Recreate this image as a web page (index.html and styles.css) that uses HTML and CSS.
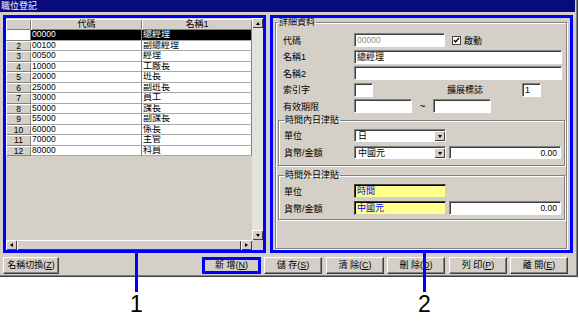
FILE: index.html
```html
<!DOCTYPE html>
<html lang="zh-Hant">
<head>
  <meta charset="UTF-8">
  <title>職位登記</title>
  <link rel="stylesheet" href="styles.css">
</head>
<body>
  <div class="screen">
    <div class="window">
      <div class="titlebar">職位登記</div>

      <div class="panels">
        <div class="box left-box">
          <div class="grid-area">
            <div class="table">
              <div class="rh"></div><div class="hd">代碼</div><div class="hd">名稱1</div>

              <div class="rh current"></div><div class="cell num sel">00000</div><div class="cell sel">總經理</div>
              <div class="rh">2</div><div class="cell num">00100</div><div class="cell">副總經理</div>
              <div class="rh">3</div><div class="cell num">00500</div><div class="cell">經理</div>
              <div class="rh">4</div><div class="cell num">10000</div><div class="cell">工廠長</div>
              <div class="rh">5</div><div class="cell num">20000</div><div class="cell">班長</div>
              <div class="rh">6</div><div class="cell num">25000</div><div class="cell">副班長</div>
              <div class="rh">7</div><div class="cell num">30000</div><div class="cell">員工</div>
              <div class="rh">8</div><div class="cell num">50000</div><div class="cell">課長</div>
              <div class="rh">9</div><div class="cell num">55000</div><div class="cell">副課長</div>
              <div class="rh">10</div><div class="cell num">60000</div><div class="cell">係長</div>
              <div class="rh">11</div><div class="cell num">70000</div><div class="cell">主管</div>
              <div class="rh">12</div><div class="cell num">80000</div><div class="cell">科員</div>
            </div>
            <div class="vscroll">
              <div class="arrow up"></div>
              <div class="track"></div>
              <div class="arrow down"></div>
            </div>
          </div>
          <div class="hscroll">
            <div class="arrow left"></div>
            <div class="thumb"></div>
            <div class="arrow right"></div>
            <div class="corner"></div>
          </div>
        </div>

        <div class="box right-box">
          <fieldset class="group detail">
            <legend>詳細資料</legend>
            <div class="field">
              <span class="label">代碼</span>
              <span class="input w-code disabled">00000</span>
              <span class="check">
                <svg width="9" height="9" viewBox="0 0 9 9"><rect x="0.5" y="0.5" width="8" height="8" fill="#fff" stroke="#404040"/><path d="M2 4 L3.6 6 L7 2" fill="none" stroke="#000" stroke-width="1.3"/></svg>
              </span>
              <span class="check-label">啟動</span>
            </div>
            <div class="field">
              <span class="label">名稱1</span>
              <span class="input w-name">總經理</span>
            </div>
            <div class="field">
              <span class="label">名稱2</span>
              <span class="input w-name"></span>
            </div>
            <div class="field">
              <span class="label">索引字</span>
              <span class="input w-tiny"></span>
              <span class="ext-label">擴展標誌</span>
              <span class="input w-tiny">1</span>
            </div>
            <div class="field">
              <span class="label">有效期限</span>
              <span class="input w-date"></span>
              <span class="tilde">~</span>
              <span class="input w-date"></span>
            </div>

            <fieldset class="group sub sub-in">
              <legend>時間內日津貼</legend>
              <div class="field">
                <span class="label">單位</span>
                <span class="input select"><span class="val">日</span><span class="drop"></span></span>
              </div>
              <div class="field">
                <span class="label">貨幣/金額</span>
                <span class="input select"><span class="val">中國元</span><span class="drop"></span></span>
                <span class="input amount">0.00</span>
              </div>
            </fieldset>

            <fieldset class="group sub sub-out">
              <legend>時間外日津貼</legend>
              <div class="field">
                <span class="label">單位</span>
                <span class="input hatch">時間</span>
              </div>
              <div class="field">
                <span class="label">貨幣/金額</span>
                <span class="input hatch">中國元</span>
                <span class="input amount">0.00</span>
              </div>
            </fieldset>
          </fieldset>
        </div>
      </div>

      <div class="buttons">
        <div class="btn switch">名稱切換(<u>Z</u>)</div>
        <div class="btn add">新&nbsp;增(<u>N</u>)</div>
        <div class="btn save">儲&nbsp;存(<u>S</u>)</div>
        <div class="btn">清&nbsp;除(<u>C</u>)</div>
        <div class="btn">刪&nbsp;除(<u>D</u>)</div>
        <div class="btn">列&nbsp;印(<u>P</u>)</div>
        <div class="btn">離&nbsp;開(<u>E</u>)</div>
      </div>
    </div>

    <div class="callout one"><span>1</span></div>
    <div class="callout two"><span>2</span></div>
  </div>
</body>
</html>
```

FILE: styles.css
```css
body {
  margin: 0;
  background: #fff;
  font-family: "Liberation Sans", "Noto Sans CJK TC", sans-serif;
  font-size: 9px;
  color: #000;
}

.screen {
  position: relative;
  width: 579px;
  height: 321px;
  overflow: hidden;
}

.window {
  width: 578px;
  height: 277px;
  box-sizing: border-box;
  background: #d4d0c8;
  box-shadow: inset -1px -1px 0 #404040, inset -2px -2px 0 #808080;
}

.titlebar {
  width: 575px;
  height: 12px;
  background: #0a0a80;
  color: #fff;
  line-height: 12px;
  padding-left: 1px;
  box-sizing: border-box;
}

.panels {
  display: flex;
  gap: 4px;
  padding: 3px 0 0 3px;
}

.box {
  border: 3px solid #0000ff;
  height: 238px;
  box-sizing: border-box;
}

/* left: grid list */
.left-box {
  width: 263px;
  display: flex;
  flex-direction: column;
}

.grid-area {
  display: flex;
  height: 222px;
}

.table {
  width: 246px;
  display: grid;
  grid-template-columns: 25px 111px 110px;
  grid-template-rows: 11px;
  grid-auto-rows: 10.5px;
  align-content: start;
  padding-top: 1px;
}

.rh, .hd {
  background: #d4d0c8;
  box-shadow: inset 1px 1px 0 #fff, inset -1px -1px 0 #808080;
  text-align: center;
  line-height: 10px;
  overflow: hidden;
}

.rh {
  font-size: 8.5px;
}

.rh.current {
  background: #fff;
  box-shadow: inset -1px -1px 0 #808080;
}

.cell {
  background: #fff;
  border-right: 1px solid #808080;
  border-bottom: 1px solid #a8a8a8;
  padding-left: 1px;
  line-height: 9.5px;
  white-space: nowrap;
  overflow: hidden;
}

.cell.num {
  font-size: 8.5px;
}

.cell.sel {
  background: #000;
  color: #fff;
}

.vscroll {
  width: 11px;
  display: flex;
  flex-direction: column;
}

.track {
  flex: 1;
  background: #e4e2dc;
}

.arrow {
  flex: none;
  width: 11px;
  height: 10px;
  box-sizing: border-box;
  background: #d4d0c8;
  box-shadow: inset 1px 1px 0 #fff, inset -1px -1px 0 #404040;
  display: flex;
  align-items: center;
  justify-content: center;
}

.arrow::after {
  content: "";
  border: 2px solid transparent;
}

.arrow.up::after { border-bottom: 3px solid #000; border-top: 0; }
.arrow.down::after { border-top: 3px solid #000; border-bottom: 0; }
.arrow.left::after { border-right: 3px solid #000; border-left: 0; }
.arrow.right::after { border-left: 3px solid #000; border-right: 0; }

.hscroll {
  height: 10px;
  display: flex;
}

.thumb {
  flex: 1;
  background: #d4d0c8;
  box-shadow: inset 1px 1px 0 #fff, inset -1px -1px 0 #404040;
}

.corner {
  width: 11px;
  background: #d4d0c8;
}

/* right: detail form */
.right-box {
  width: 303px;
  display: flex;
  flex-direction: column;
}

.group {
  border: 1px solid #808080;
  box-shadow: inset 1px 1px 0 #fff, 1px 1px 0 #fff;
  min-width: 0;
  margin: 0;
}

.group legend {
  padding: 0 1px;
  line-height: 9px;
  font-size: 9px;
}

.detail {
  flex: 1;
  margin: 0 3px 1px 2px;
  padding: 6px 1px 0 2px;
}

.detail > .field {
  padding-left: 5px;
}

.field {
  display: flex;
  align-items: center;
  height: 14px;
}

.field + .field {
  margin-top: 2.5px;
}

.label {
  width: 71px;
  flex: none;
}

.sub .label {
  width: 70px;
}

.sub {
  padding: 0 0 0 5px;
}

.sub-in {
  margin-top: 3px;
  padding-top: 4px;
  padding-bottom: 6px;
}

.sub-in .field {
  height: 13px;
}

.sub-in .field + .field {
  margin-top: 4px;
}

.sub-out {
  margin-top: 5px;
  padding-top: 4px;
  padding-bottom: 4px;
}

.sub-out .field + .field {
  margin-top: 3px;
}

.input {
  flex: none;
  box-sizing: border-box;
  height: 100%;
  background: #fff;
  border: 1px solid;
  border-color: #808080 #fff #fff #808080;
  box-shadow: inset 1px 1px 0 #404040;
  padding: 1px 2px 0;
  line-height: 11px;
  white-space: nowrap;
  overflow: hidden;
}

.input.disabled {
  color: #909090;
  font-size: 8.5px;
}

.w-code { width: 91px; }
.w-name { width: 208px; }
.w-tiny { width: 19px; }
.w-date { width: 58px; }

.check {
  display: flex;
  margin-left: 7px;
}

.check-label {
  margin-left: 3px;
}

.ext-label {
  width: 75px;
  margin-left: 74px;
  flex: none;
}

.tilde {
  width: 21px;
  text-align: center;
  font-size: 10px;
}

.select {
  width: 92px;
  display: flex;
  padding: 1px 0 0 1px;
}

.select .val {
  flex: 1;
  padding-left: 2px;
  line-height: 10px;
}

.drop {
  width: 11px;
  background: #d4d0c8;
  box-shadow: inset 1px 1px 0 #fff, inset -1px -1px 0 #404040;
  display: flex;
  align-items: center;
  justify-content: center;
}

.drop::after {
  content: "";
  border: 2px solid transparent;
  border-top: 3px solid #000;
  border-bottom: 0;
}

.amount {
  width: 112px;
  margin-left: 3px;
  text-align: right;
  padding-right: 3px;
  font-size: 8.5px;
}

.hatch {
  width: 92px;
  color: #0000ff;
  border-color: #404040 #d4d0c8 #d4d0c8 #404040;
  box-shadow: inset 1px 1px 0 #000;
  background: #ffff8a;
}

/* bottom buttons */
.buttons {
  display: flex;
  padding-left: 3px;
  margin-top: 4px;
  height: 17px;
}

.btn {
  width: 58px;
  height: 17px;
  box-sizing: border-box;
  margin-left: 3px;
  background: #d4d0c8;
  border: 1px solid;
  border-color: #fff #404040 #404040 #fff;
  box-shadow: inset -1px -1px 0 #808080;
  text-align: center;
  line-height: 14px;
  white-space: nowrap;
}

.btn:nth-child(even) {
  margin-left: 4px;
}

.btn.switch {
  width: 56px;
  margin-left: 0;
}

.btn.add {
  width: 59px;
  margin-left: 143px;
  border: 3px solid #0000ff;
  box-shadow: none;
  line-height: 11px;
}

/* annotation callouts */
.callout {
  position: absolute;
  top: 253px;
  width: 3px;
  height: 39px;
  background: #0000ff;
}

.callout.one { left: 135px; }
.callout.two { left: 423px; }

.callout span {
  position: absolute;
  top: 40px;
  left: 50%;
  transform: translateX(-50%);
  font-size: 23px;
  line-height: 23px;
  color: #000;
}
```
